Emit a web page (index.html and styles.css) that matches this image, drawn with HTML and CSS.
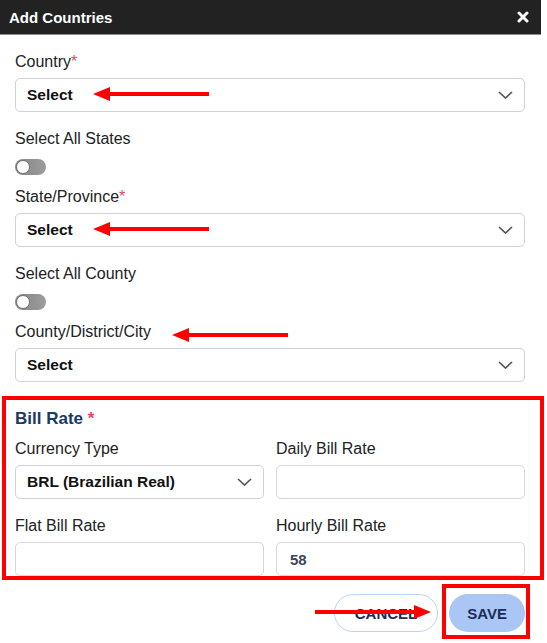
FILE: index.html
```html
<!DOCTYPE html>
<html>
<head>
<meta charset="utf-8">
<title>Add Countries</title>
<link rel="stylesheet" href="styles.css">
</head>
<body>
<div class="modal">
  <div class="modal-header">
    <span class="modal-title">Add Countries</span>
    <svg class="close-icon" viewBox="0 0 12 12"><path d="M2 2L10 10M10 2L2 10" stroke="#fff" stroke-width="3" stroke-linecap="round"/></svg>
  </div>
  <div class="modal-body">
    <div class="field">
      <div class="label">Country<span class="req">*</span></div>
      <div class="select">
        <span class="select-value">Select</span>
        <svg class="chevron" viewBox="0 0 15 8"><polyline points="1,1 7.5,7 14,1" fill="none" stroke="#555" stroke-width="1.7"/></svg>
        <svg class="arrow arrow-select" viewBox="0 0 116 16"><rect x="14" y="6" width="102" height="4" fill="#f00"/><polygon points="0,8 17,1 17,15" fill="#f00"/></svg>
      </div>
    </div>
    <div class="toggle-field">
      <div class="label">Select All States</div>
      <span class="toggle"><span class="knob"></span></span>
    </div>
    <div class="field">
      <div class="label">State/Province<span class="req">*</span></div>
      <div class="select">
        <span class="select-value">Select</span>
        <svg class="chevron" viewBox="0 0 15 8"><polyline points="1,1 7.5,7 14,1" fill="none" stroke="#555" stroke-width="1.7"/></svg>
        <svg class="arrow arrow-select" viewBox="0 0 116 16"><rect x="14" y="6" width="102" height="4" fill="#f00"/><polygon points="0,8 17,1 17,15" fill="#f00"/></svg>
      </div>
    </div>
    <div class="toggle-field">
      <div class="label">Select All County</div>
      <span class="toggle"><span class="knob"></span></span>
    </div>
    <div class="field field-last">
      <div class="label label-row">County/District/City
        <svg class="arrow arrow-label" viewBox="0 0 116 16"><rect x="14" y="6" width="102" height="4" fill="#f00"/><polygon points="0,8 17,1 17,15" fill="#f00"/></svg>
      </div>
      <div class="select">
        <span class="select-value">Select</span>
        <svg class="chevron" viewBox="0 0 15 8"><polyline points="1,1 7.5,7 14,1" fill="none" stroke="#555" stroke-width="1.7"/></svg>
      </div>
    </div>

    <div class="bill-rate">
      <div class="bill-title">Bill Rate <span class="req">*</span></div>
      <div class="grid">
        <div>
          <div class="label">Currency Type</div>
          <div class="select">
            <span class="select-value">BRL (Brazilian Real)</span>
            <svg class="chevron" viewBox="0 0 15 8"><polyline points="1,1 7.5,7 14,1" fill="none" stroke="#555" stroke-width="1.7"/></svg>
          </div>
        </div>
        <div>
          <div class="label">Daily Bill Rate</div>
          <div class="input"></div>
        </div>
        <div>
          <div class="label">Flat Bill Rate</div>
          <div class="input"></div>
        </div>
        <div>
          <div class="label">Hourly Bill Rate</div>
          <div class="input">58</div>
        </div>
      </div>
    </div>

    <div class="actions">
      <button class="btn btn-cancel">CANCEL</button>
      <span class="save-frame"><button class="btn btn-save">SAVE</button></span>
      <svg class="arrow arrow-cancel" viewBox="0 0 116 16"><rect x="0" y="6" width="102" height="4" fill="#f00"/><polygon points="116,8 99,1 99,15" fill="#f00"/></svg>
    </div>
  </div>
</div>
</body>
</html>
```

FILE: styles.css
```css
html, body {
  min-height: 643px;
}

body {
  margin: 0;
  font-family: "Liberation Sans", Arial, sans-serif;
  color: #222;
  background: #fff;
}

.modal {
  width: 541px;
}

.modal-header {
  height: 34px;
  background: #222;
  border-bottom: 1px solid #8d8d8d;
  display: flex;
  align-items: center;
  justify-content: space-between;
  padding: 0 12px 0 9px;
}

.modal-title {
  color: #fff;
  font-weight: bold;
  font-size: 15px;
}

.close-icon {
  width: 12px;
  height: 12px;
}

.modal-body {
  padding: 17px 16px 11px 15px;
}

.field {
  margin-bottom: 17px;
}

.field-last {
  margin-bottom: 14px;
}

.label {
  display: block;
  font-size: 16px;
  line-height: 20px;
  margin-bottom: 6px;
  color: #222;
}

.label-row {
  position: relative;
}

.req {
  color: #e8455a;
}

.select {
  position: relative;
  height: 34px;
  box-sizing: border-box;
  border: 1px solid #cfd2d6;
  border-radius: 5px;
  display: flex;
  align-items: center;
  justify-content: space-between;
  padding: 0 11px;
  background: #fff;
}

.select-value {
  font-weight: bold;
  font-size: 15.5px;
  color: #111;
}

.chevron {
  width: 15px;
  height: 8px;
  flex: none;
}

.toggle-field {
  margin-bottom: 12px;
}

.toggle-field .label {
  margin-bottom: 10px;
}

.toggle {
  display: flex;
  align-items: center;
  width: 31px;
  height: 16px;
  box-sizing: border-box;
  padding: 0 1px;
  border-radius: 8px;
  background: linear-gradient(90deg, #858585, #9c9c9c);
}

.knob {
  display: block;
  width: 12px;
  height: 12px;
  border-radius: 50%;
  background: #fff;
  border: 1px solid #6e6e6e;
}

.bill-rate {
  margin: 0 -19px 0 -13px;
  border: 4px solid #f00;
  padding: 9px 15px 0 9px;
}

.bill-title {
  font-size: 17px;
  font-weight: bold;
  color: #1b3a63;
  line-height: 20px;
  margin-bottom: 10px;
}

.grid {
  display: grid;
  grid-template-columns: 1fr 1fr;
  column-gap: 12px;
  row-gap: 17px;
}

.input {
  height: 34px;
  box-sizing: border-box;
  border: 1px solid #d4d7db;
  border-radius: 5px;
  padding: 0 13px;
  display: flex;
  align-items: center;
  font-weight: bold;
  font-size: 15px;
  color: #3c4656;
}

.actions {
  position: relative;
  display: flex;
  align-items: center;
  justify-content: flex-end;
  gap: 11px;
  margin-top: 14px;
}

.btn {
  height: 38px;
  box-sizing: border-box;
  border-radius: 19px;
  font-family: inherit;
  font-weight: bold;
  font-size: 15px;
  color: #1c2b5a;
  display: flex;
  align-items: center;
  border: 1px solid transparent;
  margin: 0;
}

.btn-cancel {
  background: #fff;
  border-color: #bcd3f7;
  padding: 0 20px;
}

.btn-save {
  background: #a9c6f4;
  padding: 0 17px;
}

.save-frame {
  display: block;
  border: 4px solid #f00;
  padding: 6px 1px 3px 3px;
  margin: -10px -5px -7px -7px;
}

.arrow {
  position: absolute;
  width: 116px;
  height: 16px;
  z-index: 2;
}

.arrow-select {
  left: 77px;
  top: 7px;
}

.arrow-label {
  left: 157px;
  top: 5px;
}

.arrow-cancel {
  left: 300px;
  top: 10px;
}
```
